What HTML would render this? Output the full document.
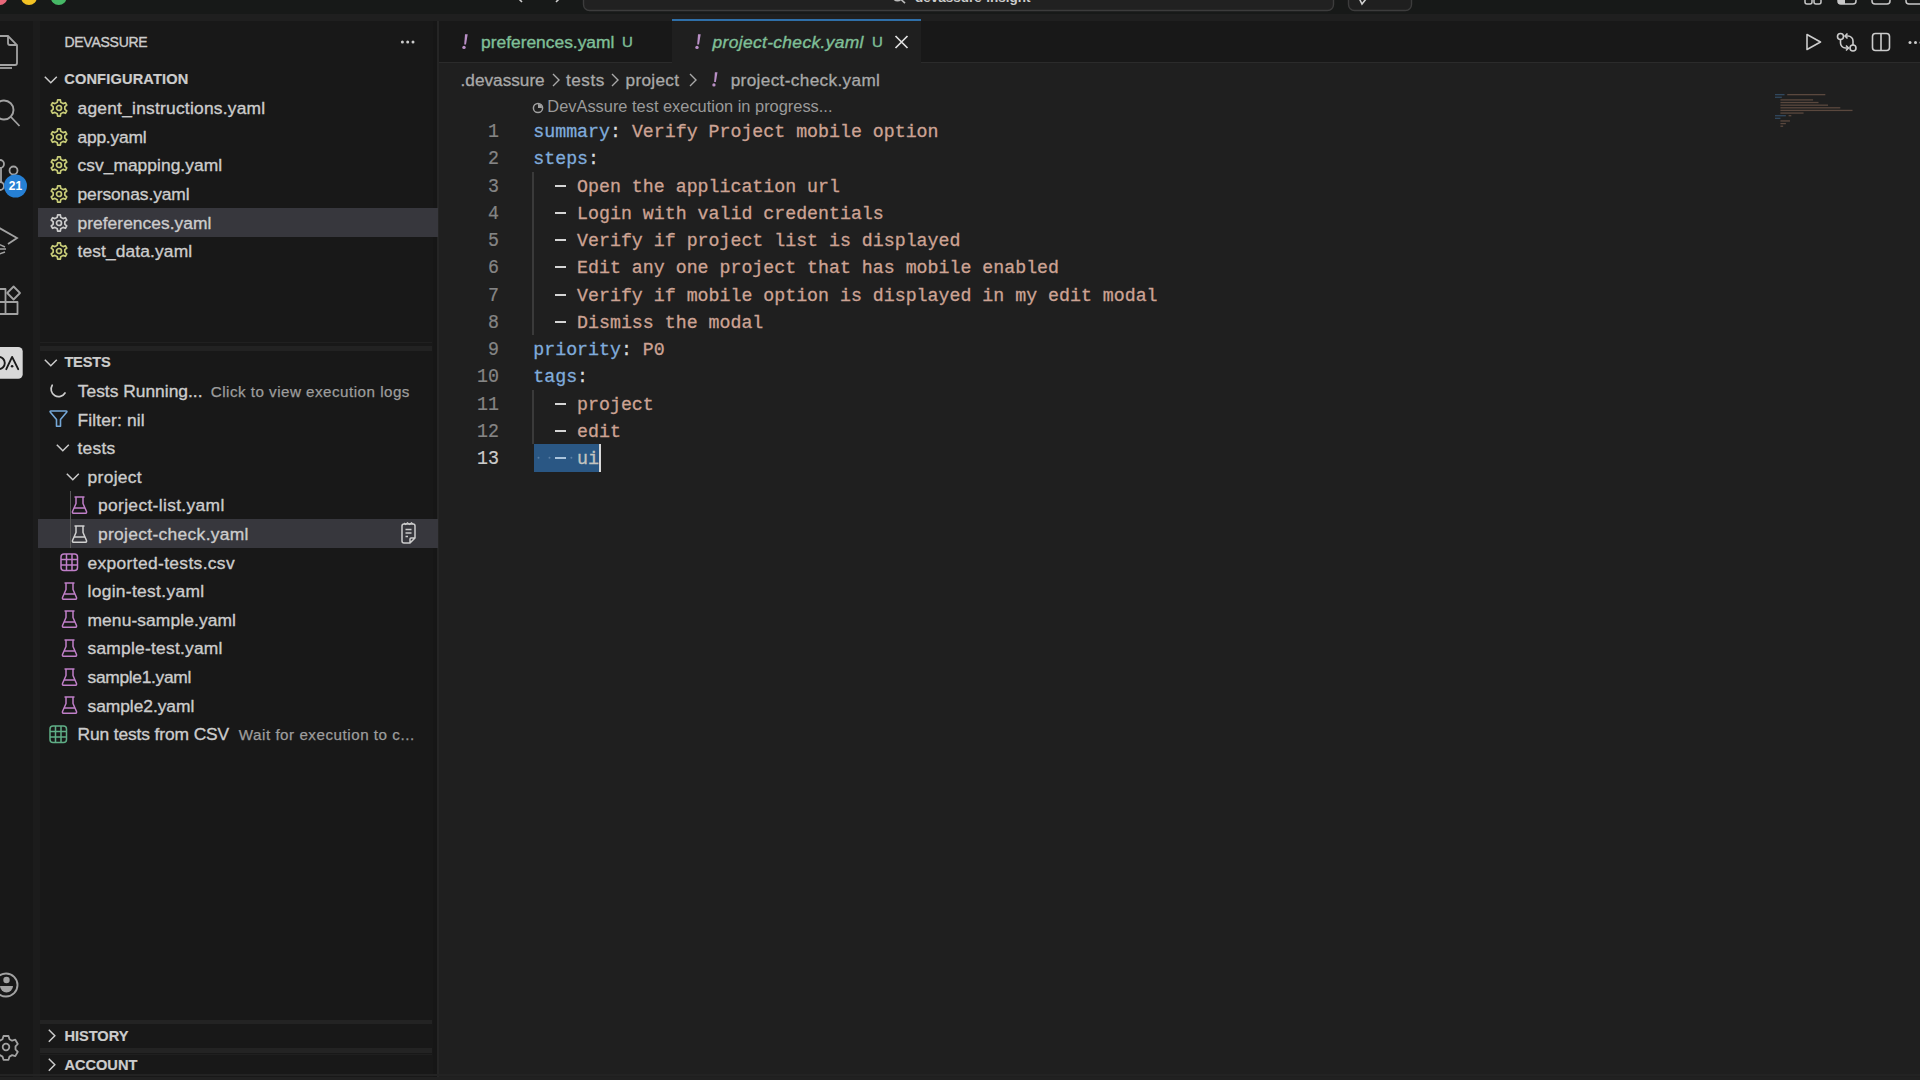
<!DOCTYPE html>
<html><head><meta charset="utf-8">
<style>
*{margin:0;padding:0;box-sizing:border-box}
html,body{width:1920px;height:1080px;overflow:hidden;background:#181818;font-family:"Liberation Sans",sans-serif;color:#cccccc}
.a{position:absolute;white-space:nowrap}
svg{position:absolute;overflow:visible}
#title{left:0;top:0;width:1920px;height:15px;background:#171918}
#tborder{left:0;top:14px;width:1920px;height:7px;background:#1f1f1f}
#act{left:0;top:21px;width:33px;height:1059px;background:#181818}
#actb{left:33px;top:21px;width:7px;height:1059px;background:#1c1c1c}
#side{left:40px;top:21px;width:393px;height:1059px;background:#181818}
#sideb{left:433px;top:21px;width:5px;height:1059px;background:#161616}
#sideb2{left:437px;top:21px;width:2px;height:1059px;background:#252525}
#editor{left:439px;top:63px;width:1481px;height:1017px;background:#1f1f1f}
#tabs{left:439px;top:21px;width:1481px;height:42px;background:#181818}
#tabsb{left:439px;top:62px;width:1481px;height:1px;background:#2b2b2b}
.lbl{position:absolute;font-size:17.4px;line-height:22px;color:#cccccc;white-space:nowrap;-webkit-text-stroke:0.35px currentColor}
.desc{position:absolute;font-size:15.2px;line-height:22px;color:#9d9d9d;white-space:nowrap;-webkit-text-stroke:0.25px currentColor}
.hdr{position:absolute;font-size:14.6px;font-weight:bold;line-height:22px;color:#cccccc;white-space:nowrap;-webkit-text-stroke:0.2px currentColor}
.code{position:absolute;font-family:"Liberation Mono",monospace;font-size:18.25px;line-height:27.25px;white-space:pre;-webkit-text-stroke:0.3px currentColor}
.ln{position:absolute;left:440px;width:59px;text-align:right;font-family:"Liberation Mono",monospace;font-size:18.25px;line-height:27.25px;color:#858585;transform:scaleY(1.1);transform-origin:0 12.5px;-webkit-text-stroke:0.2px currentColor}
.k{color:#80acdc}.s{color:#cda394}.p{color:#dddddd}

</style></head><body>
<div id="title" class="a"></div>
<div id="tborder" class="a"></div>
<div id="act" class="a"></div>
<div id="actb" class="a"></div>
<div id="side" class="a"></div>
<div id="sideb" class="a"></div>
<div id="sideb2" class="a"></div>
<div id="tabs" class="a"></div>
<div id="tabsb" class="a"></div>
<div id="editor" class="a"></div>
<svg style="left:0;top:0" width="1920" height="16">
<circle cx="-0.5" cy="-3" r="8" fill="#e8687a"/>
<circle cx="29" cy="-3" r="8" fill="#f2c224"/>
<circle cx="58.7" cy="-3" r="8" fill="#46b866"/>
<path d="M517 -3 L522 2" stroke="#cfcfcf" stroke-width="1.6" fill="none"/>
<path d="M561 -3 L556 2" stroke="#cfcfcf" stroke-width="1.6" fill="none"/>
<rect x="583.5" y="-12" width="750" height="22.5" rx="6" fill="#212121" stroke="#3c3c3c" stroke-width="1.4"/>
<circle cx="897.5" cy="-4" r="4.8" fill="none" stroke="#bbbbbb" stroke-width="1.5"/><path d="M901 -0.5 L905 3.2" stroke="#bbbbbb" stroke-width="1.6"/>
<rect x="1348.5" y="-12" width="63" height="22.5" rx="6" fill="#1f1f1f" stroke="#3c3c3c" stroke-width="1.4"/>
<path d="M1358 -4 L1362 4 L1366 -1" stroke="#d0d0d0" stroke-width="1.6" fill="none"/>
<rect x="1805" y="-8" width="7" height="12" rx="2" fill="none" stroke="#c8c8c8" stroke-width="1.5"/>
<rect x="1814" y="-8" width="7" height="12" rx="2" fill="none" stroke="#c8c8c8" stroke-width="1.5"/>
<rect x="1838" y="-8" width="18" height="12" rx="3" fill="none" stroke="#c8c8c8" stroke-width="1.5"/>
<path d="M1838 -6 h7 v10 h-5 a2 2 0 0 1 -2 -2z" fill="#c8c8c8"/>
<rect x="1872" y="-8" width="18" height="12" rx="3" fill="none" stroke="#c8c8c8" stroke-width="1.5"/>
<rect x="1906" y="-8" width="18" height="12" rx="3" fill="none" stroke="#c8c8c8" stroke-width="1.5"/>
</svg>
<div class="a" style="left:915px;top:-10.5px;font-size:13.5px;font-weight:bold;line-height:16px;color:#cccccc">devassure-insight</div>
<svg style="left:0;top:21px" width="33" height="1059">
<path d="M-8 15 H8 L17 24 V42 a2 2 0 0 1 -2 2 H-8" fill="none" stroke="#a2a2a2" stroke-width="1.8"/>
<path d="M8 15 V22 a2 2 0 0 0 2 2 H17" fill="none" stroke="#a2a2a2" stroke-width="1.8"/>
<path d="M-8 47 H12" stroke="#a2a2a2" stroke-width="1.8"/>
<circle cx="4" cy="89" r="9.5" fill="none" stroke="#a2a2a2" stroke-width="1.9"/>
<path d="M11 96 L19.5 105" stroke="#a2a2a2" stroke-width="1.8"/>
<circle cx="0" cy="143" r="4" fill="none" stroke="#a2a2a2" stroke-width="1.8"/>
<circle cx="13.5" cy="149.5" r="4" fill="none" stroke="#a2a2a2" stroke-width="1.8"/>
<path d="M1 147 V162" stroke="#a2a2a2" stroke-width="1.8"/>
<circle cx="0" cy="165" r="4" fill="none" stroke="#a2a2a2" stroke-width="1.8"/>
<circle cx="15.5" cy="165" r="11.5" fill="#2680d5"/>
<path d="M-6 204 L17 217 L8 223" fill="none" stroke="#a2a2a2" stroke-width="1.8"/>
<path d="M-4 222 L5 226 M-4 228 L6 228 M-4 234 L5 231" stroke="#a2a2a2" stroke-width="1.5"/>
<path d="M-6 268 H5.5 V293 H-6 M-6 281 H17.5 V293 H5.5" fill="none" stroke="#a2a2a2" stroke-width="1.8" stroke-linejoin="round"/>
<path d="M13.6 265.5 L20 272 L13.6 278.5 L7.2 272 Z" fill="none" stroke="#a2a2a2" stroke-width="1.8" stroke-linejoin="round"/>
<rect x="-12" y="326" width="34.7" height="31.8" rx="4.5" fill="#d8d8d8"/>
<path d="M-5 336 H-1 a5.8 6 0 0 1 0 12 H-5" fill="none" stroke="#1a1a1a" stroke-width="1.9"/>
<path d="M6.3 348.2 L12.1 335.9 L18.2 348.2" fill="none" stroke="#1a1a1a" stroke-width="1.9" stroke-linecap="round" stroke-linejoin="round"/>
<circle cx="12.1" cy="345.3" r="1.3" fill="#1a1a1a"/>
<circle cx="6" cy="964" r="11.5" fill="none" stroke="#a2a2a2" stroke-width="1.9"/>
<circle cx="6.5" cy="959" r="3.2" fill="#a2a2a2"/>
<path d="M0 965 h13 a6.5 6.5 0 0 1 -13 0z" fill="#a2a2a2"/>
</svg>
<div class="a" style="left:5px;top:177px;width:21px;text-align:center;font-size:12px;font-weight:bold;line-height:18px;color:#ffffff">21</div>
<svg style="left:0;top:0" width="33" height="1080"><g transform="translate(6 1047)">
<path d="M-2.5 -11 h5 l1 3.2 l2.6 1.5 l3.2 -1 l2.5 4.3 l-2.3 2.4 v3 l2.3 2.4 l-2.5 4.3 l-3.2 -1 l-2.6 1.5 l-1 3.2 h-5 l-1 -3.2 l-2.6 -1.5 l-3.2 1 l-2.5 -4.3 l2.3 -2.4 v-3 l-2.3 -2.4 l2.5 -4.3 l3.2 1 l2.6 -1.5 z" fill="none" stroke="#a2a2a2" stroke-width="1.8" stroke-linejoin="round"/>
<circle cx="0" cy="0" r="3.3" fill="none" stroke="#a2a2a2" stroke-width="1.8"/></g></svg>
<div class="a" style="left:38px;top:208px;width:399.5px;height:28.6px;background:#37373d"></div>
<div class="a" style="left:38px;top:519.4px;width:399.5px;height:28.6px;background:#37373d"></div>
<div class="a" style="left:40px;top:342px;width:392px;height:1.2px;background:#202020"></div>
<div class="a" style="left:40px;top:346px;width:392px;height:5px;background:#222222"></div>
<div class="a" style="left:40px;top:1020px;width:392px;height:3.5px;background:#232323"></div>
<div class="a" style="left:40px;top:1048px;width:392px;height:4.5px;background:#232323"></div>
<div class="a" style="left:40px;top:1054px;width:392px;height:1px;background:#1f1f1f"></div>
<div class="lbl" style="left:64.4px;top:31.20px;letter-spacing:-0.250px;font-size:14px;color:#cccccc">DEVASSURE</div>
<svg style="left:398px;top:38.2px" width="20" height="8"><circle cx="4.4" cy="4" r="1.5" fill="#cccccc"/><circle cx="9.7" cy="4" r="1.5" fill="#cccccc"/><circle cx="15" cy="4" r="1.5" fill="#cccccc"/></svg>
<svg style="left:44.4px;top:76px" width="14" height="8"><path d="M0.8 0.8 L6.8 6.8 L12.8 0.8" fill="none" stroke="#cccccc" stroke-width="1.5"/></svg>
<div class="hdr" style="left:64.2px;top:68.00px;letter-spacing:0.167px;">CONFIGURATION</div>
<svg style="left:49.5px;top:99.15px" width="18" height="18"><path d="M7.25 3.26 L7.64 0.81 L10.36 0.81 L10.75 3.26 L13.10 4.62 L15.41 3.73 L16.77 6.09 L14.85 7.65 L14.85 10.35 L16.77 11.91 L15.41 14.27 L13.10 13.38 L10.75 14.74 L10.36 17.19 L7.64 17.19 L7.25 14.74 L4.90 13.38 L2.59 14.27 L1.23 11.91 L3.15 10.35 L3.15 7.65 L1.23 6.09 L2.59 3.73 L4.90 4.62 Z" fill="none" stroke="#c8cc78" stroke-width="1.7" stroke-linejoin="round"/><circle cx="9" cy="9" r="2.5" fill="none" stroke="#c8cc78" stroke-width="1.7"/></svg>
<div class="lbl" style="left:77.5px;top:97.15px;letter-spacing:0.227px;">agent_instructions.yaml</div>
<svg style="left:49.5px;top:127.75px" width="18" height="18"><path d="M7.25 3.26 L7.64 0.81 L10.36 0.81 L10.75 3.26 L13.10 4.62 L15.41 3.73 L16.77 6.09 L14.85 7.65 L14.85 10.35 L16.77 11.91 L15.41 14.27 L13.10 13.38 L10.75 14.74 L10.36 17.19 L7.64 17.19 L7.25 14.74 L4.90 13.38 L2.59 14.27 L1.23 11.91 L3.15 10.35 L3.15 7.65 L1.23 6.09 L2.59 3.73 L4.90 4.62 Z" fill="none" stroke="#c8cc78" stroke-width="1.7" stroke-linejoin="round"/><circle cx="9" cy="9" r="2.5" fill="none" stroke="#c8cc78" stroke-width="1.7"/></svg>
<div class="lbl" style="left:77.5px;top:125.75px;letter-spacing:-0.214px;">app.yaml</div>
<svg style="left:49.5px;top:156.35000000000002px" width="18" height="18"><path d="M7.25 3.26 L7.64 0.81 L10.36 0.81 L10.75 3.26 L13.10 4.62 L15.41 3.73 L16.77 6.09 L14.85 7.65 L14.85 10.35 L16.77 11.91 L15.41 14.27 L13.10 13.38 L10.75 14.74 L10.36 17.19 L7.64 17.19 L7.25 14.74 L4.90 13.38 L2.59 14.27 L1.23 11.91 L3.15 10.35 L3.15 7.65 L1.23 6.09 L2.59 3.73 L4.90 4.62 Z" fill="none" stroke="#c8cc78" stroke-width="1.7" stroke-linejoin="round"/><circle cx="9" cy="9" r="2.5" fill="none" stroke="#c8cc78" stroke-width="1.7"/></svg>
<div class="lbl" style="left:77.5px;top:154.35px;letter-spacing:0.033px;">csv_mapping.yaml</div>
<svg style="left:49.5px;top:184.95000000000002px" width="18" height="18"><path d="M7.25 3.26 L7.64 0.81 L10.36 0.81 L10.75 3.26 L13.10 4.62 L15.41 3.73 L16.77 6.09 L14.85 7.65 L14.85 10.35 L16.77 11.91 L15.41 14.27 L13.10 13.38 L10.75 14.74 L10.36 17.19 L7.64 17.19 L7.25 14.74 L4.90 13.38 L2.59 14.27 L1.23 11.91 L3.15 10.35 L3.15 7.65 L1.23 6.09 L2.59 3.73 L4.90 4.62 Z" fill="none" stroke="#c8cc78" stroke-width="1.7" stroke-linejoin="round"/><circle cx="9" cy="9" r="2.5" fill="none" stroke="#c8cc78" stroke-width="1.7"/></svg>
<div class="lbl" style="left:77.5px;top:182.95px;letter-spacing:-0.083px;">personas.yaml</div>
<svg style="left:49.5px;top:213.55px" width="18" height="18"><path d="M7.25 3.26 L7.64 0.81 L10.36 0.81 L10.75 3.26 L13.10 4.62 L15.41 3.73 L16.77 6.09 L14.85 7.65 L14.85 10.35 L16.77 11.91 L15.41 14.27 L13.10 13.38 L10.75 14.74 L10.36 17.19 L7.64 17.19 L7.25 14.74 L4.90 13.38 L2.59 14.27 L1.23 11.91 L3.15 10.35 L3.15 7.65 L1.23 6.09 L2.59 3.73 L4.90 4.62 Z" fill="none" stroke="#cccccc" stroke-width="1.7" stroke-linejoin="round"/><circle cx="9" cy="9" r="2.5" fill="none" stroke="#cccccc" stroke-width="1.7"/></svg>
<div class="lbl" style="left:77.5px;top:211.55px;letter-spacing:0.033px;">preferences.yaml</div>
<svg style="left:49.5px;top:242.15px" width="18" height="18"><path d="M7.25 3.26 L7.64 0.81 L10.36 0.81 L10.75 3.26 L13.10 4.62 L15.41 3.73 L16.77 6.09 L14.85 7.65 L14.85 10.35 L16.77 11.91 L15.41 14.27 L13.10 13.38 L10.75 14.74 L10.36 17.19 L7.64 17.19 L7.25 14.74 L4.90 13.38 L2.59 14.27 L1.23 11.91 L3.15 10.35 L3.15 7.65 L1.23 6.09 L2.59 3.73 L4.90 4.62 Z" fill="none" stroke="#c8cc78" stroke-width="1.7" stroke-linejoin="round"/><circle cx="9" cy="9" r="2.5" fill="none" stroke="#c8cc78" stroke-width="1.7"/></svg>
<div class="lbl" style="left:77.5px;top:240.15px;letter-spacing:0.115px;">test_data.yaml</div>
<svg style="left:44px;top:359px" width="14" height="8"><path d="M0.8 0.8 L6.8 6.8 L12.8 0.8" fill="none" stroke="#cccccc" stroke-width="1.5"/></svg>
<div class="hdr" style="left:64.4px;top:351.40px;letter-spacing:-0.200px;">TESTS</div>
<svg style="left:50px;top:383px" width="16" height="16"><path d="M2.2 2.2 A6.8 6.8 0 0 0 15 10" fill="none" stroke="#cccccc" stroke-width="1.7" stroke-linecap="round"/></svg>
<div class="lbl" style="left:77.8px;top:380.00px;letter-spacing:0.000px;">Tests Running...</div>
<div class="desc" style="left:210.75px;top:380.50px;letter-spacing:0.481px;">Click to view execution logs</div>
<svg style="left:49px;top:409px" width="20" height="20"><path d="M2 2 H17 Q18.5 2 17.6 3.3 L11.5 10.5 V17.3 H7.5 V10.5 L1.4 3.3 Q0.5 2 2 2 Z" fill="none" stroke="#75a8d8" stroke-width="1.6" stroke-linejoin="round"/></svg>
<div class="lbl" style="left:77.5px;top:408.60px;letter-spacing:0.150px;">Filter: nil</div>
<svg style="left:55.5px;top:444px" width="14" height="8"><path d="M0.8 0.8 L6.8 6.8 L12.8 0.8" fill="none" stroke="#cccccc" stroke-width="1.5"/></svg>
<div class="lbl" style="left:77.5px;top:437.20px;letter-spacing:0.250px;">tests</div>
<svg style="left:65.8px;top:473px" width="14" height="8"><path d="M0.8 0.8 L6.8 6.8 L12.8 0.8" fill="none" stroke="#cccccc" stroke-width="1.5"/></svg>
<div class="lbl" style="left:87.5px;top:465.80px;letter-spacing:0.333px;">project</div>
<div class="a" style="left:69.5px;top:491px;width:1.2px;height:57px;background:#585858"></div>
<svg style="left:71px;top:495.9px" width="17" height="19"><path d="M3.5 1 H13.5 M5 1 V7.5 L1.5 15.5 a1.3 1.3 0 0 0 1.2 1.8 H14.3 a1.3 1.3 0 0 0 1.2 -1.8 L12 7.5 V1 M3.2 12 H13.8" fill="none" stroke="#c07fc8" stroke-width="1.5" stroke-linejoin="round"/></svg>
<div class="lbl" style="left:98px;top:494.40px;letter-spacing:0.344px;">porject-list.yaml</div>
<svg style="left:71px;top:524.5px" width="17" height="19"><path d="M3.5 1 H13.5 M5 1 V7.5 L1.5 15.5 a1.3 1.3 0 0 0 1.2 1.8 H14.3 a1.3 1.3 0 0 0 1.2 -1.8 L12 7.5 V1 M3.2 12 H13.8" fill="none" stroke="#d0d0d0" stroke-width="1.5" stroke-linejoin="round"/></svg>
<div class="lbl" style="left:98px;top:523.00px;letter-spacing:0.324px;">project-check.yaml</div>
<svg style="left:400px;top:522px" width="18" height="23"><path d="M2 4 V19 a2 2 0 0 0 2 2 H10 L15 16 V4 a2 2 0 0 0 -2 -2 H4 a2 2 0 0 0 -2 2z M10 21 V17 a1 1 0 0 1 1 -1 H15" fill="none" stroke="#cccccc" stroke-width="1.5" stroke-linejoin="round"/><path d="M5.5 7.5 H11.5 M5.5 11 H11.5 M5.5 14.5 H8" stroke="#cccccc" stroke-width="1.5"/><path d="M4 1 L5.5 2.5 L7.5 0.8 L9.5 2.5 L11.5 0.8 L13 2" fill="none" stroke="#cccccc" stroke-width="1.2"/></svg>
<svg style="left:60px;top:552.95px" width="19" height="19"><rect x="1" y="1" width="16.5" height="16.5" rx="3" fill="none" stroke="#c07fc8" stroke-width="1.5"/><path d="M6.5 1 V17.5 M12 1 V17.5 M1 6.5 H17.5 M1 12 H17.5" stroke="#c07fc8" stroke-width="1.5"/></svg>
<div class="lbl" style="left:87.5px;top:551.60px;letter-spacing:0.353px;">exported-tests.csv</div>
<svg style="left:61px;top:581.7px" width="17" height="19"><path d="M3.5 1 H13.5 M5 1 V7.5 L1.5 15.5 a1.3 1.3 0 0 0 1.2 1.8 H14.3 a1.3 1.3 0 0 0 1.2 -1.8 L12 7.5 V1 M3.2 12 H13.8" fill="none" stroke="#c07fc8" stroke-width="1.5" stroke-linejoin="round"/></svg>
<div class="lbl" style="left:87.5px;top:580.20px;letter-spacing:0.321px;">login-test.yaml</div>
<svg style="left:61px;top:610.3000000000001px" width="17" height="19"><path d="M3.5 1 H13.5 M5 1 V7.5 L1.5 15.5 a1.3 1.3 0 0 0 1.2 1.8 H14.3 a1.3 1.3 0 0 0 1.2 -1.8 L12 7.5 V1 M3.2 12 H13.8" fill="none" stroke="#c07fc8" stroke-width="1.5" stroke-linejoin="round"/></svg>
<div class="lbl" style="left:87.5px;top:608.80px;letter-spacing:0.100px;">menu-sample.yaml</div>
<svg style="left:61px;top:638.9000000000001px" width="17" height="19"><path d="M3.5 1 H13.5 M5 1 V7.5 L1.5 15.5 a1.3 1.3 0 0 0 1.2 1.8 H14.3 a1.3 1.3 0 0 0 1.2 -1.8 L12 7.5 V1 M3.2 12 H13.8" fill="none" stroke="#c07fc8" stroke-width="1.5" stroke-linejoin="round"/></svg>
<div class="lbl" style="left:87.5px;top:637.40px;letter-spacing:0.233px;">sample-test.yaml</div>
<svg style="left:61px;top:667.5px" width="17" height="19"><path d="M3.5 1 H13.5 M5 1 V7.5 L1.5 15.5 a1.3 1.3 0 0 0 1.2 1.8 H14.3 a1.3 1.3 0 0 0 1.2 -1.8 L12 7.5 V1 M3.2 12 H13.8" fill="none" stroke="#c07fc8" stroke-width="1.5" stroke-linejoin="round"/></svg>
<div class="lbl" style="left:87.5px;top:666.00px;letter-spacing:-0.318px;">sample1.yaml</div>
<svg style="left:61px;top:696.1px" width="17" height="19"><path d="M3.5 1 H13.5 M5 1 V7.5 L1.5 15.5 a1.3 1.3 0 0 0 1.2 1.8 H14.3 a1.3 1.3 0 0 0 1.2 -1.8 L12 7.5 V1 M3.2 12 H13.8" fill="none" stroke="#c07fc8" stroke-width="1.5" stroke-linejoin="round"/></svg>
<div class="lbl" style="left:87.5px;top:694.60px;letter-spacing:-0.045px;">sample2.yaml</div>
<svg style="left:49.4px;top:724.75px" width="19" height="19"><rect x="1" y="1" width="16.5" height="16.5" rx="3" fill="none" stroke="#5fae86" stroke-width="1.5"/><path d="M6.5 1 V17.5 M12 1 V17.5 M1 6.5 H17.5 M1 12 H17.5" stroke="#5fae86" stroke-width="1.5"/></svg>
<div class="lbl" style="left:77.5px;top:723.40px;letter-spacing:-0.118px;">Run tests from CSV</div>
<div class="desc" style="left:238.75px;top:724.00px;letter-spacing:0.520px;">Wait for execution to c...</div>
<svg style="left:48px;top:1029px" width="8" height="14"><path d="M0.8 0.8 L6.8 6.8 L0.8 12.8" fill="none" stroke="#cccccc" stroke-width="1.5"/></svg>
<div class="hdr" style="left:64.4px;top:1025.40px;letter-spacing:0.000px;">HISTORY</div>
<svg style="left:48px;top:1058px" width="8" height="14"><path d="M0.8 0.8 L6.8 6.8 L0.8 12.8" fill="none" stroke="#cccccc" stroke-width="1.5"/></svg>
<div class="hdr" style="left:64.4px;top:1054.00px;letter-spacing:0.000px;">ACCOUNT</div>
<div class="a" style="left:0;top:1074px;width:1920px;height:2px;background:#232323"></div>
<div class="a" style="left:0;top:1077px;width:1920px;height:3px;background:#212121"></div>
<div class="a" style="left:440px;top:21px;width:230px;height:41px;background:#181818"></div>
<div class="a" style="left:671.5px;top:19px;width:249px;height:44px;background:#1f1f1f"></div>
<div class="a" style="left:671.5px;top:19px;width:249px;height:2px;background:#2f6fa8"></div>
<svg style="left:462.3px;top:33.9px" width="6" height="16"><g transform="scale(1.000)"><path d="M3.0 0.2 H5.7 L4.0 10.4 H2.2 Z" fill="#b98fc6"/><circle cx="2.0" cy="13.4" r="1.7" fill="#b98fc6"/></g></svg>
<div class="a" style="left:481px;top:31.00px;font-size:17.4px;line-height:22px;-webkit-text-stroke:0.4px currentColor;color:#7fbf97">preferences.yaml</div>
<div class="a" style="left:622px;top:31.00px;font-size:17.4px;line-height:22px;-webkit-text-stroke:0.4px currentColor;color:#7fbf97;font-size:15px">U</div>
<svg style="left:695px;top:33.9px" width="6" height="16"><g transform="scale(1.000)"><path d="M3.0 0.2 H5.7 L4.0 10.4 H2.2 Z" fill="#b98fc6"/><circle cx="2.0" cy="13.4" r="1.7" fill="#b98fc6"/></g></svg>
<div class="a" style="left:712.5px;top:31.00px;font-size:17.4px;line-height:22px;-webkit-text-stroke:0.4px currentColor;color:#7fbf97;font-style:italic;letter-spacing:0.35px">project-check.yaml</div>
<div class="a" style="left:872px;top:31.00px;font-size:17.4px;line-height:22px;-webkit-text-stroke:0.4px currentColor;color:#7fbf97;font-size:15px">U</div>
<svg style="left:894px;top:35px" width="15" height="14"><path d="M1.5 1 L13.5 13 M13.5 1 L1.5 13" stroke="#e0e0e0" stroke-width="1.7"/></svg>
<svg style="left:1800px;top:28px" width="120" height="28">
<path d="M7 6.5 L20.5 14 L7 21.5 Z" fill="none" stroke="#cccccc" stroke-width="1.6" stroke-linejoin="round"/>
<circle cx="40.5" cy="8.5" r="3" fill="none" stroke="#cccccc" stroke-width="1.6"/>
<circle cx="53" cy="20" r="3" fill="none" stroke="#cccccc" stroke-width="1.6"/>
<path d="M40.5 11.5 V15 a5 5 0 0 0 5 5 H48" fill="none" stroke="#cccccc" stroke-width="1.6"/>
<path d="M46 17.5 L48.5 20 L46 22.5" fill="none" stroke="#cccccc" stroke-width="1.6"/>
<path d="M53 17 V13 a5 5 0 0 0 -5 -5 H45.5" fill="none" stroke="#cccccc" stroke-width="1.6"/>
<path d="M47.5 5.5 L45 8 L47.5 10.5" fill="none" stroke="#cccccc" stroke-width="1.6"/>
<rect x="72.5" y="5.5" width="17" height="17" rx="3" fill="none" stroke="#cccccc" stroke-width="1.6"/>
<path d="M81 5.5 V22.5" stroke="#cccccc" stroke-width="1.6"/>
<circle cx="110" cy="14.5" r="1.5" fill="#cccccc"/><circle cx="115.5" cy="14.5" r="1.5" fill="#cccccc"/><circle cx="121" cy="14.5" r="1.5" fill="#cccccc"/>
</svg>
<div class="a" style="left:460.6px;top:68.60px;font-size:17.2px;line-height:22px;color:#a9a9a9;-webkit-text-stroke:0.3px currentColor;">.devassure</div>
<svg style="left:551.5px;top:73px" width="9" height="14"><path d="M1 1 L7 7 L1 13" fill="none" stroke="#a9a9a9" stroke-width="1.4"/></svg>
<div class="a" style="left:566px;top:68.60px;font-size:17.2px;line-height:22px;color:#a9a9a9;-webkit-text-stroke:0.3px currentColor;letter-spacing:0.5px">tests</div>
<svg style="left:611px;top:73px" width="9" height="14"><path d="M1 1 L7 7 L1 13" fill="none" stroke="#a9a9a9" stroke-width="1.4"/></svg>
<div class="a" style="left:625.5px;top:68.60px;font-size:17.2px;line-height:22px;color:#a9a9a9;-webkit-text-stroke:0.3px currentColor;letter-spacing:0.33px">project</div>
<svg style="left:688.5px;top:73px" width="9" height="14"><path d="M1 1 L7 7 L1 13" fill="none" stroke="#a9a9a9" stroke-width="1.4"/></svg>
<svg style="left:711.8px;top:71.9px" width="6" height="16"><g transform="scale(0.967)"><path d="M3.0 0.2 H5.7 L4.0 10.4 H2.2 Z" fill="#b98fc6"/><circle cx="2.0" cy="13.4" r="1.7" fill="#b98fc6"/></g></svg>
<div class="a" style="left:730.7px;top:68.60px;font-size:17.2px;line-height:22px;color:#a9a9a9;-webkit-text-stroke:0.3px currentColor;letter-spacing:0.35px">project-check.yaml</div>
<svg style="left:531.5px;top:101.5px" width="12" height="12"><circle cx="6" cy="6" r="4.6" fill="none" stroke="#a0a0a0" stroke-width="1.5"/><path d="M6 6 V2 A4 4 0 0 1 10 6 Z" fill="#a0a0a0"/></svg>
<div class="a" style="left:547.3px;top:95.80px;font-size:16.4px;line-height:20px;color:#9a9a9a">DevAssure test execution in progress...</div>
<div class="a" style="left:533.7px;top:444px;width:65.5px;height:27.5px;background:#2a5784"></div>
<div class="a" style="left:532.3px;top:171.88px;width:1.7px;height:163.50px;background:#3a3a3a"></div>
<div class="a" style="left:532.3px;top:389.88px;width:1.7px;height:54.50px;background:#3a3a3a"></div>
<div class="ln" style="top:118.18px;color:#858585">1</div>
<div class="code" style="left:533.3px;top:119.18px"><span class="k">summary</span><span class="p">:</span> <span class="s">Verify Project mobile option</span></div>
<div class="ln" style="top:145.43px;color:#858585">2</div>
<div class="code" style="left:533.3px;top:146.43px"><span class="k">steps</span><span class="p">:</span></div>
<div class="ln" style="top:172.68px;color:#858585">3</div>
<div class="code" style="left:533.3px;top:173.68px">    <span class="s">Open the application url</span></div>
<div class="a" style="left:555.3px;top:185px;width:10.3px;height:2px;background:#d4d4d4"></div>
<div class="ln" style="top:199.93px;color:#858585">4</div>
<div class="code" style="left:533.3px;top:200.93px">    <span class="s">Login with valid credentials</span></div>
<div class="a" style="left:555.3px;top:212px;width:10.3px;height:2px;background:#d4d4d4"></div>
<div class="ln" style="top:227.18px;color:#858585">5</div>
<div class="code" style="left:533.3px;top:228.18px">    <span class="s">Verify if project list is displayed</span></div>
<div class="a" style="left:555.3px;top:239px;width:10.3px;height:2px;background:#d4d4d4"></div>
<div class="ln" style="top:254.43px;color:#858585">6</div>
<div class="code" style="left:533.3px;top:255.43px">    <span class="s">Edit any one project that has mobile enabled</span></div>
<div class="a" style="left:555.3px;top:266px;width:10.3px;height:2px;background:#d4d4d4"></div>
<div class="ln" style="top:281.68px;color:#858585">7</div>
<div class="code" style="left:533.3px;top:282.68px">    <span class="s">Verify if mobile option is displayed in my edit modal</span></div>
<div class="a" style="left:555.3px;top:294px;width:10.3px;height:2px;background:#d4d4d4"></div>
<div class="ln" style="top:308.93px;color:#858585">8</div>
<div class="code" style="left:533.3px;top:309.93px">    <span class="s">Dismiss the modal</span></div>
<div class="a" style="left:555.3px;top:321px;width:10.3px;height:2px;background:#d4d4d4"></div>
<div class="ln" style="top:336.18px;color:#858585">9</div>
<div class="code" style="left:533.3px;top:337.18px"><span class="k">priority</span><span class="p">:</span> <span class="s">P0</span></div>
<div class="ln" style="top:363.43px;color:#858585">10</div>
<div class="code" style="left:533.3px;top:364.43px"><span class="k">tags</span><span class="p">:</span></div>
<div class="ln" style="top:390.68px;color:#858585">11</div>
<div class="code" style="left:533.3px;top:391.68px">    <span class="s">project</span></div>
<div class="a" style="left:555.3px;top:403px;width:10.3px;height:2px;background:#d4d4d4"></div>
<div class="ln" style="top:417.93px;color:#858585">12</div>
<div class="code" style="left:533.3px;top:418.93px">    <span class="s">edit</span></div>
<div class="a" style="left:555.3px;top:430px;width:10.3px;height:2px;background:#d4d4d4"></div>
<div class="ln" style="top:445.18px;color:#cccccc">13</div>
<div class="code" style="left:533.3px;top:446.18px">    <span class="s" style="color:#c4c4c0">ui</span></div>
<div class="a" style="left:555.3px;top:457px;width:10.3px;height:2px;background:#aac4dd"></div>
<svg style="left:533px;top:444px" width="70" height="28"><circle cx="5.5" cy="13.7" r="1" fill="#5a7fa5"/><circle cx="16.5" cy="13.7" r="1" fill="#5a7fa5"/><circle cx="38.4" cy="13.7" r="1" fill="#5a7fa5"/></svg>
<div class="a" style="left:598.6px;top:444px;width:2px;height:27.5px;background:#d8d8d8"></div>
<svg style="left:0;top:0" width="1920" height="200"><rect x="1775.0" y="94.0" width="9.520000000000001" height="1.3" fill="#3f6a92" opacity="0.55"/><rect x="1787.24" y="94.0" width="38.080000000000005" height="1.3" fill="#8a6a58" opacity="0.55"/><rect x="1775.0" y="96.63" width="6.800000000000001" height="1.3" fill="#3f6a92" opacity="0.55"/><rect x="1780.44" y="99.26" width="32.64" height="1.3" fill="#8a6a58" opacity="0.55"/><rect x="1780.44" y="101.89" width="38.080000000000005" height="1.3" fill="#8a6a58" opacity="0.55"/><rect x="1780.44" y="104.52" width="47.6" height="1.3" fill="#8a6a58" opacity="0.55"/><rect x="1780.44" y="107.15" width="59.84" height="1.3" fill="#8a6a58" opacity="0.55"/><rect x="1780.44" y="109.78" width="72.08" height="1.3" fill="#8a6a58" opacity="0.55"/><rect x="1780.44" y="112.41" width="23.12" height="1.3" fill="#8a6a58" opacity="0.55"/><rect x="1775.0" y="115.03999999999999" width="10.88" height="1.3" fill="#3f6a92" opacity="0.55"/><rect x="1788.6" y="115.03999999999999" width="2.72" height="1.3" fill="#8a6a58" opacity="0.55"/><rect x="1775.0" y="117.67" width="5.44" height="1.3" fill="#3f6a92" opacity="0.55"/><rect x="1780.44" y="120.3" width="9.520000000000001" height="1.3" fill="#8a6a58" opacity="0.55"/><rect x="1780.44" y="122.93" width="5.44" height="1.3" fill="#8a6a58" opacity="0.55"/><rect x="1780.44" y="125.56" width="2.72" height="1.3" fill="#8a6a58" opacity="0.55"/></svg>
</body></html>
